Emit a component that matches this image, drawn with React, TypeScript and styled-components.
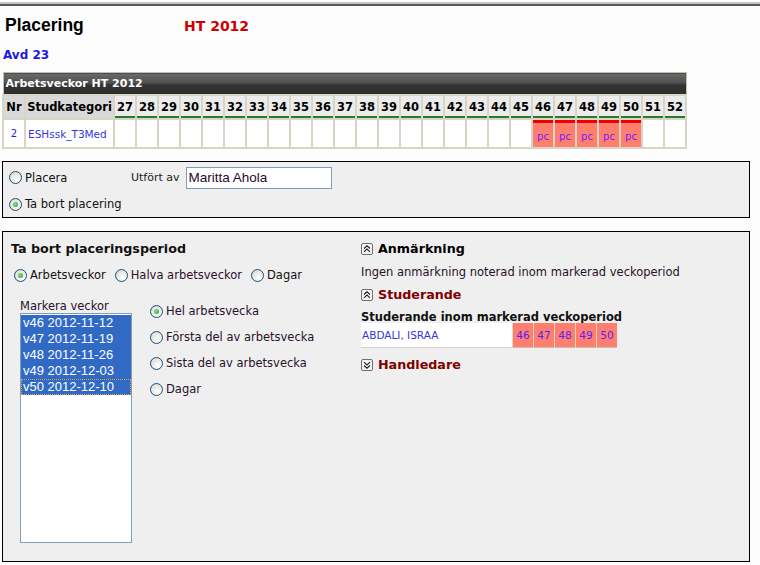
import React from 'react';
import styled, { createGlobalStyle, css } from 'styled-components';

const GlobalStyle = createGlobalStyle`
  html, body {
    margin: 0;
    padding: 0;
    background: #fdfdfd;
  }
  body {
    font-family: "DejaVu Sans", Verdana, sans-serif;
    font-size: 11.5px;
    color: #111;
  }
`;

const weeks = Array.from({ length: 26 }, (_, i) => 27 + i);
const placed = [46, 47, 48, 49, 50];
const listWeeks = [
  'v46 2012-11-12',
  'v47 2012-11-19',
  'v48 2012-11-26',
  'v49 2012-12-03',
  'v50 2012-12-10',
];

const Page = styled.div`
  width: 760px;
`;

const TopRule = styled.div`
  height: 0;
  margin-top: 2px;
  border-top: 2px solid #c4c4c4;
  border-bottom: 2px solid #5c5b52;
`;

const TitleRow = styled.div`
  display: flex;
  align-items: baseline;
  padding: 9px 0 0 5px;
  height: 24px;
`;

const Title = styled.h1`
  margin: 0;
  width: 179px;
  font-family: "Liberation Sans", Arial, sans-serif;
  font-size: 17.5px;
  font-weight: bold;
  color: #000;
`;

const Term = styled.span`
  font-size: 14px;
  font-weight: bold;
  color: #cc0000;
`;

const Division = styled.div`
  margin: 9px 0 0 3px;
  font-size: 12px;
  font-weight: bold;
  color: #1a1ae6;
  height: 16px;
`;

const WeekTable = styled.table`
  margin: 8px 0 0 2px;
  border-collapse: collapse;
  table-layout: fixed;
  width: 685px;
  border: 1px solid #c3bfa8;
`;

const BarCell = styled.th`
  height: 21px;
  padding: 0 0 0 2px;
  text-align: left;
  color: #fff;
  font-size: 11px;
  font-weight: bold;
  background: linear-gradient(#6a6a6a 0%, #4e4e4e 48%, #333 52%, #2e2e2e 100%);
  border: 1px solid #c3bfa8;
`;

const HeadCell = styled.th<{ $week?: boolean }>`
  height: 22px;
  padding: 0;
  font-size: 11.5px;
  font-weight: bold;
  color: #000;
  text-align: center;
  border: 2px solid #d8d5c6;
  ${({ $week }) =>
    $week
      ? css`
          background: #ececec;
          box-shadow: inset 0 -2px 0 #2b7a2b;
        `
      : css`
          background: #d9d9d9;
        `}
`;

const DataCell = styled.td<{ $placed?: boolean }>`
  height: 22px;
  padding: 0;
  text-align: center;
  font-size: 10px;
  color: #2222dd;
  border: 2px solid #d8d5c6;
  background: #fff;
  ${({ $placed }) =>
    $placed &&
    css`
      background: #fe7f6e;
      box-shadow: inset 0 3px 0 #ee0000;
      color: #7a1cff;
      padding-top: 5px;
    `}
`;

const CategoryLink = styled.span`
  color: #3636e0;
  font-size: 10.5px;
  display: block;
  text-align: left;
  padding-left: 2px;
`;

const Panel = styled.div`
  margin-left: 2px;
  width: 748px;
  border: 1px solid #000;
  background: #efefef;
`;

const ModePanel = styled(Panel)`
  margin-top: 12px;
  display: grid;
  grid-template-columns: 122px auto;
  grid-template-rows: 27px 26px;
  padding: 2px 0 0 6px;
  box-sizing: border-box;
  height: 57px;
`;

const PeriodPanel = styled(Panel)`
  margin-top: 13px;
  height: 331px;
  box-sizing: border-box;
  display: flex;
`;

const RadioLabel = styled.label<{ $dim?: boolean }>`
  display: inline-flex;
  align-items: center;
  gap: 3px;
  font-size: 11.5px;
  color: ${({ $dim }) => ($dim ? '#2a102a' : '#111')};
  white-space: nowrap;
`;

const RadioDot = styled.span<{ $checked?: boolean }>`
  position: relative;
  width: 11px;
  height: 11px;
  border-radius: 50%;
  border: 1px solid #1c4f7e;
  background: radial-gradient(circle at 65% 70%, #fff 0%, #e6e6e0 60%, #cfcfc6 100%);
  flex: none;
  ${({ $checked }) =>
    $checked &&
    css`
      &::after {
        content: '';
        position: absolute;
        left: 3px;
        top: 3px;
        width: 5px;
        height: 5px;
        border-radius: 50%;
        background: radial-gradient(circle at 40% 40%, #8ce28c, #1d9a1d);
      }
    `}
`;

const Radio: React.FC<{ checked?: boolean; dim?: boolean; children: React.ReactNode }> = ({
  checked,
  dim,
  children,
}) => (
  <RadioLabel $dim={dim}>
    <RadioDot $checked={checked} />
    {children}
  </RadioLabel>
);

const DoneBy = styled.div`
  display: flex;
  align-items: center;
  gap: 6px;
  font-size: 11px;
  color: #222;
`;

const NameInput = styled.div`
  width: 142px;
  height: 20px;
  border: 1px solid #7f9db9;
  background: #fff;
  font-family: "Liberation Sans", Arial, sans-serif;
  font-size: 13.5px;
  color: #2a0a2a;
  line-height: 20px;
  padding-left: 2px;
  box-sizing: content-box;
`;

const LeftColumn = styled.div`
  width: 351px;
  padding: 9px 0 0 8px;
  box-sizing: border-box;
`;

const RightColumn = styled.div`
  flex: 1;
  padding: 9px 0 0 7px;
`;

const SectionTitle = styled.h2`
  margin: 0;
  font-size: 12.7px;
  font-weight: bold;
  color: #111;
  line-height: 16px;
`;

const RadioRow = styled.div`
  display: flex;
  gap: 9px;
  margin: 11px 0 0 3px;
`;

const SelectArea = styled.div`
  display: flex;
  gap: 18px;
  margin: 18px 0 0 9px;
`;

const ListWrap = styled.div`
  display: flex;
  flex-direction: column;
`;

const ListLabel = styled.span`
  font-size: 11.5px;
  color: #2a102a;
  line-height: 13px;
`;

const WeekList = styled.div`
  width: 110px;
  height: 227px;
  border: 1px solid #7f9db9;
  background: #fff;
  padding-top: 1px;
  box-sizing: content-box;
`;

const WeekOption = styled.div<{ $focus?: boolean }>`
  height: 16px;
  line-height: 16px;
  padding-left: 2px;
  background: #316ac5;
  color: #fff;
  font-family: "Liberation Sans", Arial, sans-serif;
  font-size: 13px;
  box-sizing: border-box;
  ${({ $focus }) =>
    $focus &&
    css`
      outline: 1px dotted #e0a040;
      outline-offset: -1px;
    `}
`;

const PartOptions = styled.div`
  display: flex;
  flex-direction: column;
  gap: 12px;
  padding-top: 4px;
`;

const Expander = styled.div<{ $accent?: boolean }>`
  display: flex;
  align-items: center;
  gap: 5px;
  font-size: 12.7px;
  font-weight: bold;
  color: ${({ $accent }) => ($accent ? '#800000' : '#000')};
  line-height: 16px;
`;

const ToggleIcon: React.FC<{ up?: boolean }> = ({ up }) => (
  <svg width="12" height="12" viewBox="0 0 12 12">
    <rect x="0.5" y="0.5" width="11" height="11" rx="1.5" fill="#f4f4f4" stroke="#6f6f6f" />
    {up ? (
      <path d="M3 5.5 L6 2.8 L9 5.5 M3 8.8 L6 6.1 L9 8.8" fill="none" stroke="#222" strokeWidth="1.1" />
    ) : (
      <path d="M3 3.2 L6 5.9 L9 3.2 M3 6.5 L6 9.2 L9 6.5" fill="none" stroke="#222" strokeWidth="1.1" />
    )}
  </svg>
);

const Note = styled.p`
  margin: 8px 0 8px 0;
  font-size: 11.5px;
  color: #2a102a;
  line-height: 14px;
`;

const SubTitle = styled.div`
  margin-top: 8px;
  font-size: 11.5px;
  font-weight: bold;
  color: #111;
  line-height: 12px;
`;

const StudentRow = styled.div`
  display: flex;
  height: 25px;
  margin-bottom: 9px;
`;

const StudentName = styled.div`
  width: 151px;
  background: #fff;
  color: #3535d8;
  font-size: 10.5px;
  display: flex;
  align-items: center;
  padding-left: 1px;
  box-sizing: border-box;
  border-bottom: 1px solid #d8d5c6;
`;

const StudentWeek = styled.div`
  width: 20px;
  background: #fe7f6e;
  color: #5a1cff;
  font-size: 10.5px;
  display: flex;
  align-items: center;
  justify-content: center;
  border-left: 1px solid #e8d8c8;
  border-bottom: 1px solid #c8c4b0;
`;

export default function App() {
  return (
    <Page>
      <GlobalStyle />
      <TopRule />
      <TitleRow>
        <Title>Placering</Title>
        <Term>HT 2012</Term>
      </TitleRow>
      <Division>Avd 23</Division>

      <WeekTable>
        <colgroup>
          <col style={{ width: 22 }} />
          <col style={{ width: 89 }} />
          {weeks.map((w) => (
            <col key={w} style={{ width: 22 }} />
          ))}
        </colgroup>
        <thead>
          <tr>
            <BarCell colSpan={28}>Arbetsveckor HT 2012</BarCell>
          </tr>
          <tr>
            <HeadCell>Nr</HeadCell>
            <HeadCell>Studkategori</HeadCell>
            {weeks.map((w) => (
              <HeadCell key={w} $week>
                {w}
              </HeadCell>
            ))}
          </tr>
        </thead>
        <tbody>
          <tr>
            <DataCell>2</DataCell>
            <DataCell>
              <CategoryLink>ESHssk_T3Med</CategoryLink>
            </DataCell>
            {weeks.map((w) => (
              <DataCell key={w} $placed={placed.includes(w)}>
                {placed.includes(w) ? 'pc' : ''}
              </DataCell>
            ))}
          </tr>
        </tbody>
      </WeekTable>

      <ModePanel>
        <Radio>Placera</Radio>
        <DoneBy>
          Utfört av
          <NameInput>Maritta Ahola</NameInput>
        </DoneBy>
        <Radio checked>Ta bort placering</Radio>
      </ModePanel>

      <PeriodPanel>
        <LeftColumn>
          <SectionTitle>Ta bort placeringsperiod</SectionTitle>
          <RadioRow>
            <Radio checked>Arbetsveckor</Radio>
            <Radio dim>Halva arbetsveckor</Radio>
            <Radio>Dagar</Radio>
          </RadioRow>
          <SelectArea>
            <ListWrap>
              <ListLabel>Markera veckor</ListLabel>
              <WeekList>
                {listWeeks.map((w, i) => (
                  <WeekOption key={w} $focus={i === listWeeks.length - 1}>
                    {w}
                  </WeekOption>
                ))}
              </WeekList>
            </ListWrap>
            <PartOptions>
              <Radio checked dim>
                Hel arbetsvecka
              </Radio>
              <Radio dim>Första del av arbetsvecka</Radio>
              <Radio dim>Sista del av arbetsvecka</Radio>
              <Radio dim>Dagar</Radio>
            </PartOptions>
          </SelectArea>
        </LeftColumn>

        <RightColumn>
          <Expander>
            <ToggleIcon up />
            Anmärkning
          </Expander>
          <Note>Ingen anmärkning noterad inom markerad veckoperiod</Note>
          <Expander $accent>
            <ToggleIcon up />
            Studerande
          </Expander>
          <SubTitle>Studerande inom markerad veckoperiod</SubTitle>
          <StudentRow>
            <StudentName>ABDALI, ISRAA</StudentName>
            {placed.map((w) => (
              <StudentWeek key={w}>{w}</StudentWeek>
            ))}
          </StudentRow>
          <Expander $accent>
            <ToggleIcon />
            Handledare
          </Expander>
        </RightColumn>
      </PeriodPanel>
    </Page>
  );
}
